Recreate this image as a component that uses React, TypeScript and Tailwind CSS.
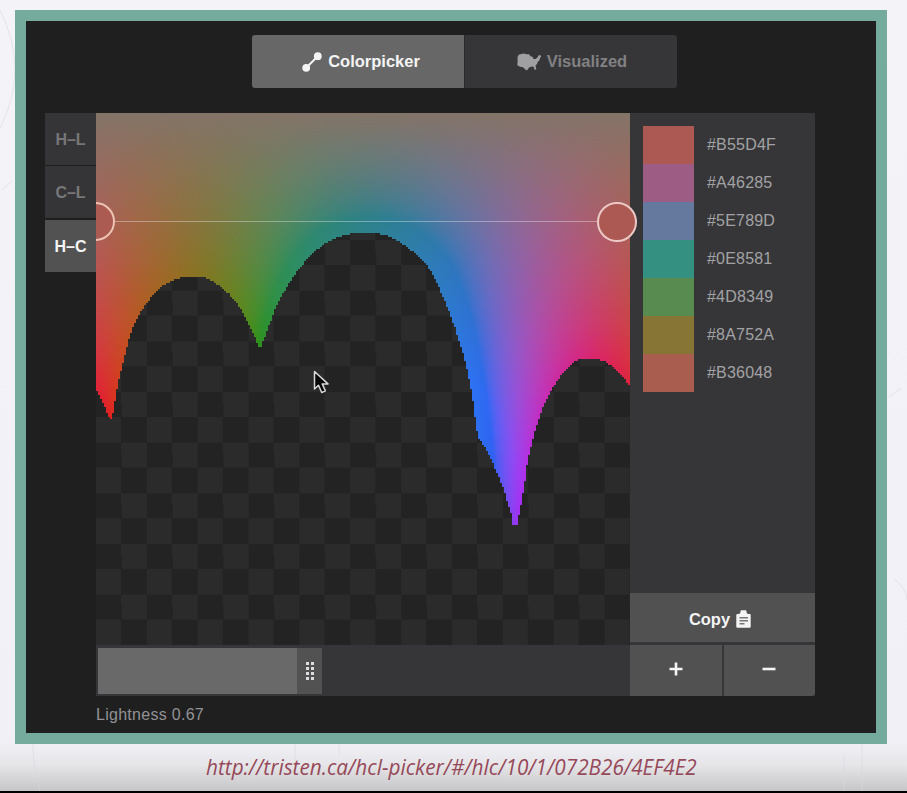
import { useEffect, useRef } from "react";

const W = 534;
const H = 532;

// Lower edge of the displayable gamut, in plot pixels; one curve per lobe.
const LOBES: [number, number][][] = [
  [[0, 277], [8, 292], [14, 307]],
  [[14, 307], [17, 300], [20, 282], [27, 249], [37, 214], [51, 190], [64, 175], [81, 166], [97, 164], [112, 166], [131, 179], [144, 195], [157, 220], [164, 237]],
  [[164, 237], [171, 218], [181, 192], [194, 169], [208, 150], [227, 132], [246, 123], [264, 120], [279, 120], [296, 125], [315, 137], [334, 157], [347, 184], [357, 209], [364, 231], [370, 252], [376, 282], [381, 318], [383, 326]],
  [[383, 326], [392, 340], [404, 367], [411, 387], [416, 405], [417, 412], [421, 412]],
  [[421, 412], [425, 392], [428, 374], [432, 347], [438, 322], [445, 300], [454, 280], [464, 264], [477, 250], [494, 245], [511, 250], [524, 261], [534, 273]],
];

function edgeAt(x: number) {
  const pts = LOBES.find((l) => x <= l[l.length - 1][0]) ?? LOBES[LOBES.length - 1];
  const n = pts.length;
  let i = 0;
  while (i < n - 2 && x > pts[i + 1][0]) i++;
  const slope = (k: number) => {
    const a = pts[Math.max(0, k - 1)];
    const b = pts[Math.min(n - 1, k + 1)];
    return (b[1] - a[1]) / (b[0] - a[0]);
  };
  const [x0, y0] = pts[i];
  const [x1, y1] = pts[i + 1];
  const d = x1 - x0;
  const t = (x - x0) / d;
  const t2 = t * t;
  const t3 = t2 * t;
  return (
    (2 * t3 - 3 * t2 + 1) * y0 +
    (t3 - 2 * t2 + t) * d * slope(i) +
    (3 * t2 - 2 * t3) * y1 +
    (t3 - t2) * d * slope(i + 1)
  );
}

function labToRgb(l: number, a: number, b: number) {
  const fy = (l + 16) / 116;
  const inv = (t: number) => (t > 0.206893 ? t * t * t : (t - 4 / 29) / 7.787037);
  const x = 0.95047 * inv(fy + a / 500);
  const y = inv(fy);
  const z = 1.08883 * inv(fy - b / 200);
  const gamma = (v: number, floor: number) => {
    const g = v <= 0.00304 ? 12.92 * v : 1.055 * Math.pow(v, 1 / 2.4) - 0.055;
    const s = 255 * Math.max(0, g);
    return Math.round(Math.min(242, Math.sqrt(s * s + floor * floor)));
  };
  return [
    gamma(3.2404542 * x - 1.5371385 * y - 0.4985314 * z, 46),
    gamma(-0.969266 * x + 1.8760108 * y + 0.041556 * z, 20),
    gamma(0.0556434 * x - 0.2040259 * y + 1.0572252 * z, 22),
  ];
}

function Plot() {
  const ref = useRef<HTMLCanvasElement>(null);
  useEffect(() => {
    const canvas = ref.current!;
    const ctx = canvas.getContext("2d")!;
    const w = canvas.width;
    const h = canvas.height;
    const img = ctx.createImageData(w, h);
    for (let i = 0; i < w; i++) {
      const x = ((i + 0.5) * W) / w;
      const limit = edgeAt(x);
      const hue = ((28 + (x / W) * 360) * Math.PI) / 180;
      const green = Math.exp(-(((x - 185) / 65) ** 2));
      for (let j = 0; j < h; j++) {
        const y = ((j + 0.5) * H) / h;
        if (y > limit) continue;
        const depth = Math.min(1, y / 200);
        const c = y * (0.285 + 0.04 * green * depth);
        const warm = Math.max(0, 1 - y / 150);
        const l = 48.5 + 5 * green * depth - 1.5 * depth;
        const rgb = labToRgb(l, c * Math.cos(hue) + warm, c * Math.sin(hue) + 8 * warm);
        const k = (j * w + i) * 4;
        img.data[k] = rgb[0];
        img.data[k + 1] = rgb[1];
        img.data[k + 2] = rgb[2];
        img.data[k + 3] = 255;
      }
    }
    ctx.putImageData(img, 0, 0);
  }, []);
  return (
    <div className="relative h-[532px] w-[534px] bg-[repeating-conic-gradient(#232324_0_25%,#2b2b2c_0_50%)] bg-size-[50.86px_50.67px]">
      <canvas ref={ref} width={267} height={266} className="block h-full w-full [image-rendering:pixelated]" />
      <div className="absolute inset-0 overflow-hidden">
        <div className="absolute left-[19px] top-[108px] h-px w-[483px] bg-white/35" />
        <div className="absolute -left-5 top-[89px] size-[39px] rounded-full border-2 border-[#edc4b4] bg-[#ab5b52]" />
      </div>
      <div className="absolute left-[501px] top-[89px] z-10 size-10 rounded-full border-2 border-[#edc9c6] bg-[#ab5952]" />
      <svg className="absolute left-[217px] top-[257px]" width="17" height="25" viewBox="0 0 17 25">
        <path d="M1.5 1.5V19l4-3.7 3.2 7.2 3.7-1.6-3.2-7H15z" fill="#080808" stroke="#d8d8da" strokeWidth="1.5" strokeLinejoin="round" />
      </svg>
    </div>
  );
}

const SWATCHES = [
  ["#B55D4F", "bg-[#ab5952]"],
  ["#A46285", "bg-[#9c5c84]"],
  ["#5E789D", "bg-[#65789d]"],
  ["#0E8581", "bg-[#349080]"],
  ["#4D8349", "bg-[#578b50]"],
  ["#8A752A", "bg-[#877535]"],
  ["#B36048", "bg-[#a85d4f]"],
];

export default function App() {
  return (
    <div className="relative flex h-[793px] w-[907px] flex-col overflow-hidden border-b-2 border-black bg-[linear-gradient(#f3f3f8_0,#f0f0f6_742px,#e6e6e9_765px,#c6c6c8_791px)] pl-[15px] pt-2.5 font-['Liberation_Sans',Arial,sans-serif]">
      <svg className="absolute inset-0" width="907" height="791" fill="none" stroke="#d9d9df" strokeWidth="1" opacity="0.6">
        <path d="M0 10Q30 70 0 128M2 190l10-9M33 744q0 24 7 47M295 744v22M339 744v10M889 397l12-9M895 580q12 9 12 20M844 755v36M862 744v47" />
      </svg>
      <div className="relative h-[734px] w-[872px] shrink-0 border-[11px] border-[#75ab9d] bg-[#1f1f20] pl-[19px] pt-3.5">
        <div className="ml-[207px] flex h-[53px] w-[425px] overflow-hidden rounded-[3px] text-[16.5px] font-bold">
          <div className="flex w-[213px] items-center justify-center gap-1.5 border-r border-[#29292a] bg-[#676767] pl-1.5 text-[#f4f4f4]">
            <svg width="20" height="20" viewBox="0 0 20 20" fill="currentColor">
              <path d="M4 16 16 4" stroke="currentColor" strokeWidth="2" />
              <circle cx="4.2" cy="15.8" r="3.9" />
              <circle cx="15.8" cy="4.2" r="3.9" />
            </svg>
            Colorpicker
          </div>
          <div className="flex flex-1 items-center justify-center gap-[5px] bg-[#363638] pl-0.5 text-[#818183]">
            <svg width="25" height="18" viewBox="0 0 25 18" fill="#a0a0a2">
              <path d="M.5 4 2 1.5 4.5 1 7 .5 9.5 1.3 12 1.2l1.5 2 2 .5 1 2.3 2 0 2-1.5 1-2 1.5-.5 1.2 1.3-1.2 2-.8 2.5-1.2.8-1 2.4-1.5 1.5.8 4-1.6.3-1.3-3.3-2.4.3-2 .7-1 1.7-1.5 1.3-2-1.7-1.5-1.6-3-.4-2.7-1.6L.6 9z" />
            </svg>
            Visualized
          </div>
        </div>
        <div className="mt-[25px] flex h-[583px]">
          <div className="flex w-[51px] flex-col gap-px text-base font-bold text-[#777779]">
            <div className="flex h-[52px] items-center justify-center bg-[#353537] pt-0.5">H–L</div>
            <div className="flex h-[52px] items-center justify-center bg-[#353537] pt-0.5">C–L</div>
            <div className="mt-px flex h-[52px] items-center justify-center bg-[#525253] pt-0.5 text-[#f4f4f4]">H–C</div>
          </div>
          <div className="w-[534px]">
            <Plot />
            <div className="flex h-[51px] bg-[#363638] pb-0.5 pl-0.5 pt-[3px]">
              <div className="w-[199px] bg-[#69696a]" />
              <div className="flex w-[25px] items-center justify-center bg-[#525253]">
                <div className="grid grid-cols-2 gap-0.5">
                  {Array.from({ length: 8 }, (_, i) => (
                    <i key={i} className="size-[3px] bg-[#dddddf]" />
                  ))}
                </div>
              </div>
            </div>
            <div className="mt-2.5 text-base leading-[18px] tracking-[0.28px] text-[#929294]">Lightness 0.67</div>
          </div>
          <div className="flex w-[185px] flex-col bg-[#363638]">
            <div className="h-[480px] pl-[13px] pt-[13px]">
              {SWATCHES.map(([hex, bg]) => (
                <div key={hex} className="flex h-[38px] items-center">
                  <div className={`h-full w-[51px] ${bg}`} />
                  <div className="pl-[13px] text-base tracking-[0.2px] text-[#a2a2a4]">{hex}</div>
                </div>
              ))}
            </div>
            <div className="flex h-[49px] items-center justify-center gap-1.5 bg-[#515152] pr-[5px] pt-[3px] text-[16.5px] font-bold text-[#f4f4f4]">
              Copy
              <svg width="15" height="18" viewBox="0 0 15 18">
                <path d="M1.3 4H2.5Q4.5 4 4.5 2V1.2Q4.5.3 5.3.3h4.4q.8 0 .8.9V2q0 2 2 2h1.2q1 0 1 1v11.7q0 1-1 1H1.3q-1 0-1-1V5q0-1 1-1z" fill="#f4f4f4" />
                <path d="M3.5 7.7h8.5M3.5 10.7h8.5M3.5 13.7h5" stroke="#777778" strokeWidth="1.4" />
              </svg>
            </div>
            <div className="mt-[3px] flex h-[51px] gap-0.5">
              <div className="flex w-[92px] items-center justify-center bg-[#515152] pb-[3px]">
                <svg width="14" height="14" stroke="#f4f4f4" strokeWidth="2.6"><path d="M7 .5v13M.5 7h13" /></svg>
              </div>
              <div className="flex flex-1 items-center justify-center rounded-br-sm bg-[#515152] pb-[3px] pr-0.5">
                <svg width="14" height="14" stroke="#f4f4f4" strokeWidth="2.6"><path d="M.5 7h13" /></svg>
              </div>
            </div>
          </div>
        </div>
      </div>
      <div className="relative ml-[191px] mt-[7px] h-8 w-[491px] origin-left scale-x-[0.988] whitespace-nowrap font-['Open_Sans',sans-serif] text-[21px] italic leading-8 text-[#964959]">
        http://tristen.ca/hcl-picker/#/hlc/10/1/072B26/4EF4E2
      </div>
    </div>
  );
}
